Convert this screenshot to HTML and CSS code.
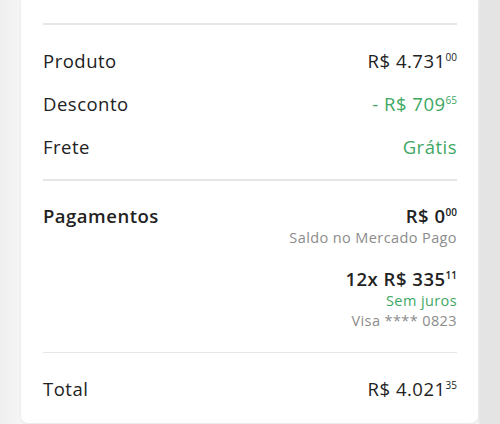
FILE: index.html
```html
<!DOCTYPE html>
<html lang="pt-BR">
<head>
<meta charset="utf-8">
<link rel="stylesheet" href="styles.css">
</head>
<body>
<div class="page">
  <div class="card">
    <div class="divider thick"></div>
    <div class="section summary">
      <div class="row">
        <span class="label">Produto</span>
        <span class="value">R$ 4.731<sup>00</sup></span>
      </div>
      <div class="row">
        <span class="label">Desconto</span>
        <span class="value green">- R$ 709<sup>65</sup></span>
      </div>
      <div class="row">
        <span class="label">Frete</span>
        <span class="value green">Grátis</span>
      </div>
    </div>
    <div class="divider thick"></div>
    <div class="section payments">
      <span class="label strong">Pagamentos</span>
      <div class="pay-list">
        <div class="pay">
          <span class="value strong">R$ 0<sup>00</sup></span>
          <span class="small gray">Saldo no Mercado Pago</span>
        </div>
        <div class="pay">
          <span class="value strong">12x R$ 335<sup>11</sup></span>
          <span class="small green">Sem juros</span>
          <span class="small gray">Visa **** 0823</span>
        </div>
      </div>
    </div>
    <div class="divider"></div>
    <div class="section total">
      <div class="row">
        <span class="label">Total</span>
        <span class="value">R$ 4.021<sup>35</sup></span>
      </div>
    </div>
  </div>
</div>
</body>
</html>
```
FILE: styles.css
```css
html, body {
  margin: 0;
  padding: 0;
}
body {
  width: 500px;
  height: 424px;
  overflow: hidden;
  background: linear-gradient(to right, #efefef 0, #f4f4f4 16px, #f4f4f4 478px, #e4e4e4 480px, #e4e4e4 500px);
  font-family: "Open Sans", "Liberation Sans", sans-serif;
  color: #222;
}
.page {
  padding-left: 21px;
  width: 457px;
}
.card {
  background: #fff;
  border-radius: 0 0 7px 7px;
  padding: 23px 21px 22px 22px;
  box-shadow: 0 1px 3px rgba(0,0,0,0.06);
}
.divider {
  height: 1px;
  background: #e6e6e6;
}
.divider.thick {
  height: 2px;
}
.section.summary {
  display: flex;
  flex-direction: column;
  gap: 19px;
  padding: 24px 0 20px;
}
.row {
  display: flex;
  justify-content: space-between;
  align-items: baseline;
}
.label, .value {
  font-size: 18.5px;
  line-height: 24px;
  letter-spacing: 0.5px;
}
.strong {
  font-weight: 600;
}
.green {
  color: #3ea863;
}
.gray {
  color: #8c8c8c;
}
sup {
  font-size: 10px;
  line-height: 0;
  vertical-align: 7px;
  letter-spacing: 0;
}
.section.payments {
  display: flex;
  justify-content: space-between;
  align-items: flex-start;
  padding: 23px 0 21px;
}
.pay-list {
  display: flex;
  flex-direction: column;
  gap: 19px;
}
.pay {
  display: flex;
  flex-direction: column;
  align-items: flex-end;
}
.small {
  font-size: 14.5px;
  line-height: 20px;
  letter-spacing: 0.4px;
}
.section.total {
  padding-top: 24px;
}
```
